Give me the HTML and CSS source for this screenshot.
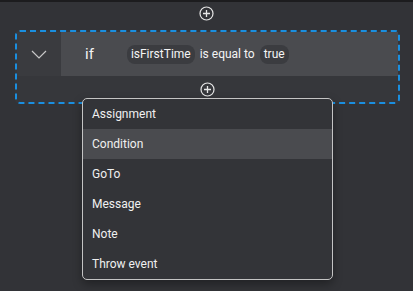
FILE: index.html
```html
<!DOCTYPE html>
<html lang="en">
<head>
  <meta charset="UTF-8" />
  <title>Flow editor</title>
  <link rel="stylesheet" href="styles.css">
</head>
<body>
  <div class="canvas">
    <div class="add-row add-top">
      <svg class="add-icon" width="15" height="15" viewBox="0 0 15 15">
        <circle cx="7.5" cy="7.5" r="6.5" fill="none" stroke="#e6e6e6" stroke-width="1.2"/>
        <path d="M7.5 4v7M4 7.5h7" stroke="#e6e6e6" stroke-width="1.3"/>
      </svg>
    </div>

    <div class="block">
      <div class="block-head">
        <div class="toggle">
          <svg width="16" height="9" viewBox="0 0 16 9">
            <path d="M1 1l7 7 7-7" fill="none" stroke="#c8c8c8" stroke-width="1.2"/>
          </svg>
        </div>
        <div class="cond">
          <span class="kw">if</span>
          <span class="chip">isFirstTime</span>
          <span class="op">is equal to</span>
          <span class="chip">true</span>
        </div>
      </div>
      <div class="add-row add-inner">
        <svg class="add-icon" width="15" height="15" viewBox="0 0 15 15">
          <circle cx="7.5" cy="7.5" r="6.5" fill="none" stroke="#e6e6e6" stroke-width="1.2"/>
          <path d="M7.5 4v7M4 7.5h7" stroke="#e6e6e6" stroke-width="1.3"/>
        </svg>
      </div>
    </div>

    <ul class="menu">
      <li>Assignment</li>
      <li class="active">Condition</li>
      <li>GoTo</li>
      <li>Message</li>
      <li>Note</li>
      <li>Throw event</li>
    </ul>
  </div>
</body>
</html>
```

FILE: styles.css
```css
body {
  margin: 0;
  background: #323337;
  font-family: Roboto, "Liberation Sans", sans-serif;
  color: #f4f4f4;
}

.canvas {
  position: relative;
  height: 289px;
  border-top: 2px solid #1c1c1e;
}

.add-row {
  display: flex;
  justify-content: center;
}

.add-top {
  height: 28px;
  padding-top: 4px;
  box-sizing: border-box;
}

.add-icon {
  display: block;
}

.block {
  margin: 0 13px 0 15px;
  border: 2px dashed #1a8fe0;
  border-radius: 5px;
  background: #36373b;
}

.block-head {
  display: flex;
  height: 44px;
  background: #4a4b4f;
}

.toggle {
  width: 44px;
  background: #3a3b3f;
  display: flex;
  align-items: center;
  justify-content: center;
}

.cond {
  display: flex;
  align-items: center;
  gap: 5px;
  padding-left: 24px;
  font-size: 12px;
}

.kw {
  font-size: 15px;
  margin-right: 28px;
}

.chip {
  background: #3b3c40;
  border-radius: 8px;
  padding: 2px 4px;
  line-height: 15px;
}

.add-inner {
  height: 26px;
  align-items: center;
}

.menu {
  position: absolute;
  left: 82px;
  top: 96px;
  width: 249px;
  margin: 0;
  padding: 0;
  list-style: none;
  background: #333438;
  border: 1px solid #c4c4c4;
  border-radius: 5px;
  box-shadow: 0 4px 10px rgba(0,0,0,0.35);
  overflow: hidden;
}

.menu li {
  height: 30px;
  line-height: 30px;
  padding-left: 9px;
  font-size: 12px;
  color: #f0f0f0;
}

.menu li.active {
  background: #4a4b4f;
}
```
